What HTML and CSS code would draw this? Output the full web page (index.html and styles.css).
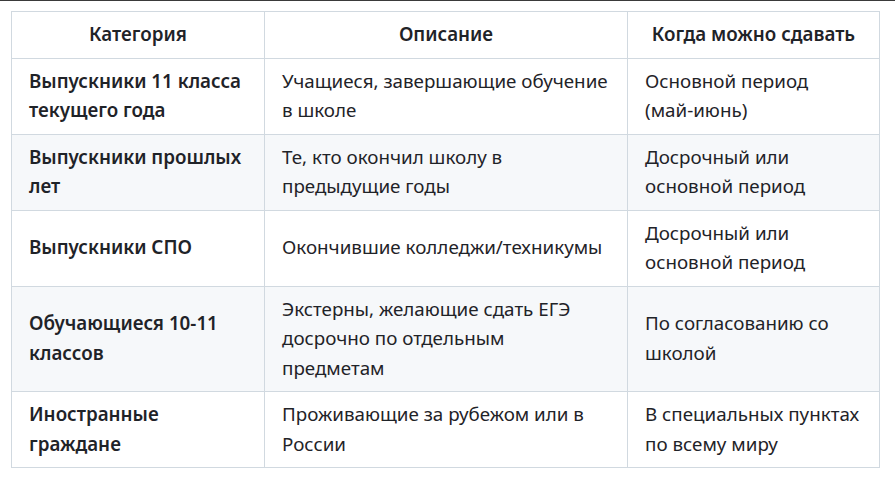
FILE: index.html
```html
<!DOCTYPE html>
<html lang="ru">
<head>
<meta charset="utf-8">
<link rel="stylesheet" href="styles.css">
</head>
<body>
<div class="topline"></div>
<div class="wrap">
<table class="tbl">
<colgroup><col class="c1"><col class="c2"><col class="c3"></colgroup>
<thead>
<tr><th>Категория</th><th>Описание</th><th>Когда можно сдавать</th></tr>
</thead>
<tbody>
<tr><td class="b">Выпускники 11 класса текущего года</td><td>Учащиеся, завершающие обучение в школе</td><td>Основной период <span class="nw">(май-июнь)</span></td></tr>
<tr><td class="b">Выпускники прошлых лет</td><td>Те, кто окончил школу в предыдущие годы</td><td>Досрочный или основной период</td></tr>
<tr><td class="b">Выпускники СПО</td><td>Окончившие колледжи/техникумы</td><td>Досрочный или основной период</td></tr>
<tr><td class="b">Обучающиеся 10-11 классов</td><td>Экстерны, желающие сдать ЕГЭ досрочно по отдельным предметам</td><td>По согласованию со школой</td></tr>
<tr><td class="b">Иностранные граждане</td><td>Проживающие за рубежом или в России</td><td>В специальных пунктах по всему миру</td></tr>
</tbody>
</table>
</div>
</body>
</html>
```
FILE: styles.css
```css
html, body { margin: 0; padding: 0; background: #fff; }
body { font-family: "Noto Sans", "Open Sans", sans-serif; color: #1f2328; font-size: 18.8px; }
.topline { height: 1px; background: #3a3a3a; }
.wrap { padding: 10px 11px; }
.tbl { border-collapse: collapse; table-layout: fixed; width: 868px; }
.c1 { width: 253px; }
.c2 { width: 363px; }
.c3 { width: 252px; }
.tbl th, .tbl td { border: 1px solid #d1d9e0; padding: 8px 17px; line-height: 29.5px; vertical-align: middle; text-align: left; }
.tbl th { font-weight: 600; text-align: center; }
.tbl td.b { font-weight: 600; }
.nw { white-space: nowrap; }
.tbl tbody tr:nth-child(odd) { background: #fff; }
.tbl tbody tr:nth-child(even) { background: #f6f8fa; }
```
